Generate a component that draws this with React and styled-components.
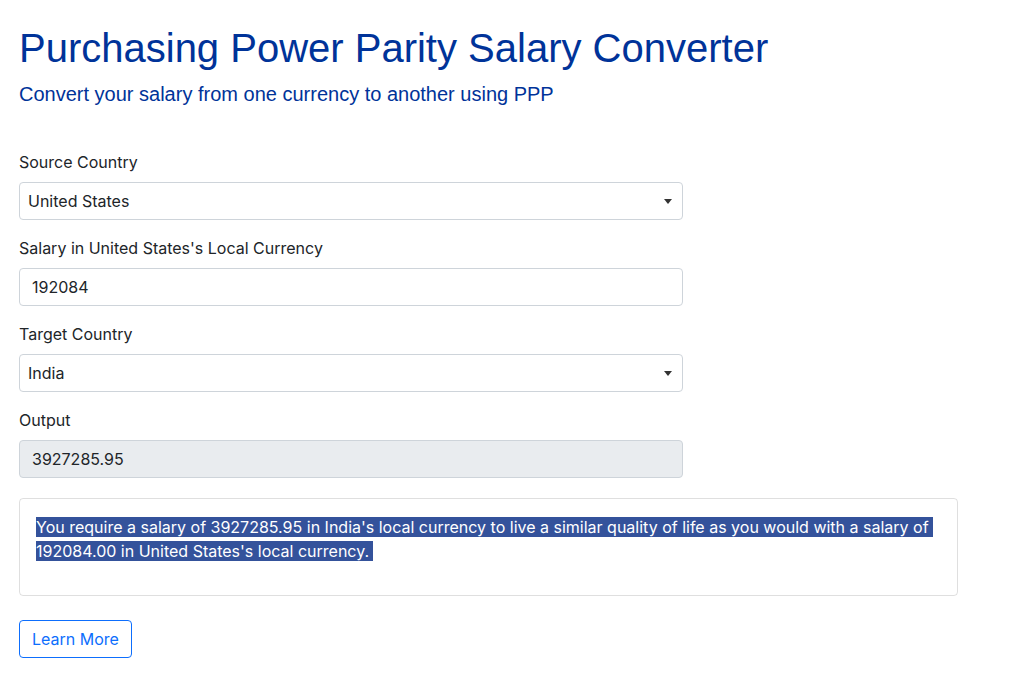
import React, { useState } from "react";
import styled, { createGlobalStyle } from "styled-components";

const GlobalStyle = createGlobalStyle`
  * { box-sizing: border-box; }
  body {
    margin: 0;
    background: #fff;
    color: #212529;
    font-family: Inter, "Noto Sans", sans-serif;
    font-size: 16px;
    line-height: 1.5;
  }
`;

const Page = styled.div`
  padding: 20px 19px;
`;

const Title = styled.h1`
  margin: 0 0 6px;
  font-family: "Liberation Sans", Arial, sans-serif;
  font-weight: 400;
  font-size: 40px;
  line-height: 56px;
  color: #003399;
`;

const Subtitle = styled.h2`
  margin: 0 0 44px;
  font-family: "Liberation Sans", Arial, sans-serif;
  font-weight: 400;
  font-size: 20px;
  line-height: 24px;
  color: #003399;
`;

const Form = styled.form`
  width: 664px;
  display: flex;
  flex-direction: column;
  gap: 16px;
`;

const Group = styled.div`
  display: flex;
  flex-direction: column;
`;

const Label = styled.label`
  margin-bottom: 8px;
  line-height: 24px;
`;

const fieldBase = `
  width: 100%;
  height: 38px;
  padding: 6px 12px;
  font-family: Inter, "Noto Sans", sans-serif;
  font-size: 16px;
  line-height: 24px;
  color: #212529;
  border: 1px solid #ced4da;
  border-radius: 4px;
  outline: none;
`;

const SelectWrap = styled.div`
  position: relative;
`;

const Select = styled.select`
  ${fieldBase}
  appearance: none;
  background: #fff;
  padding-left: 8px;
  padding-right: 32px;
`;

const Caret = styled.span`
  position: absolute;
  right: 11px;
  top: 17px;
  width: 0;
  height: 0;
  border-left: 4px solid transparent;
  border-right: 4px solid transparent;
  border-top: 5px solid #333;
  pointer-events: none;
`;

const Input = styled.input`
  ${fieldBase}
  background: ${(p) => (p.readOnly ? "#e9ecef" : "#fff")};
`;

const Card = styled.div`
  width: 939px;
  margin-top: 20px;
  padding: 16px;
  border: 1px solid rgba(0, 0, 0, 0.125);
  border-radius: 4px;
`;

const Result = styled.p`
  margin: 0 0 16px;
  color: #fff;
`;

const Highlight = styled.span`
  background: #34529b;
  color: #fff;
  padding-right: 4px;
  box-decoration-break: clone;
  -webkit-box-decoration-break: clone;
`;

const Button = styled.button`
  margin-top: 24px;
  height: 38px;
  padding: 6px 12px;
  font-family: Inter, "Noto Sans", sans-serif;
  font-size: 16px;
  line-height: 24px;
  color: #0d6efd;
  background: #fff;
  border: 1px solid #0d6efd;
  border-radius: 4px;
  cursor: pointer;
`;

const countries = ["United States", "India", "United Kingdom", "Germany", "Japan"];

export default function App() {
  const [source, setSource] = useState("United States");
  const [target, setTarget] = useState("India");
  const [salary, setSalary] = useState("192084");

  return (
    <Page>
      <GlobalStyle />
      <Title>Purchasing Power Parity Salary Converter</Title>
      <Subtitle>Convert your salary from one currency to another using PPP</Subtitle>
      <Form onSubmit={(e) => e.preventDefault()}>
        <Group>
          <Label>Source Country</Label>
          <SelectWrap>
            <Select value={source} onChange={(e) => setSource(e.target.value)}>
              {countries.map((c) => (
                <option key={c}>{c}</option>
              ))}
            </Select>
            <Caret />
          </SelectWrap>
        </Group>
        <Group>
          <Label>Salary in {source}'s Local Currency</Label>
          <Input value={salary} onChange={(e) => setSalary(e.target.value)} />
        </Group>
        <Group>
          <Label>Target Country</Label>
          <SelectWrap>
            <Select value={target} onChange={(e) => setTarget(e.target.value)}>
              {countries.map((c) => (
                <option key={c}>{c}</option>
              ))}
            </Select>
            <Caret />
          </SelectWrap>
        </Group>
        <Group>
          <Label>Output</Label>
          <Input readOnly value="3927285.95" />
        </Group>
      </Form>
      <Card>
        <Result>
          <Highlight>
            You require a salary of 3927285.95 in India's local currency to live a similar quality
            of life as you would with a salary of 192084.00 in United States's local currency.
          </Highlight>
        </Result>
      </Card>
      <Button>Learn More</Button>
    </Page>
  );
}
